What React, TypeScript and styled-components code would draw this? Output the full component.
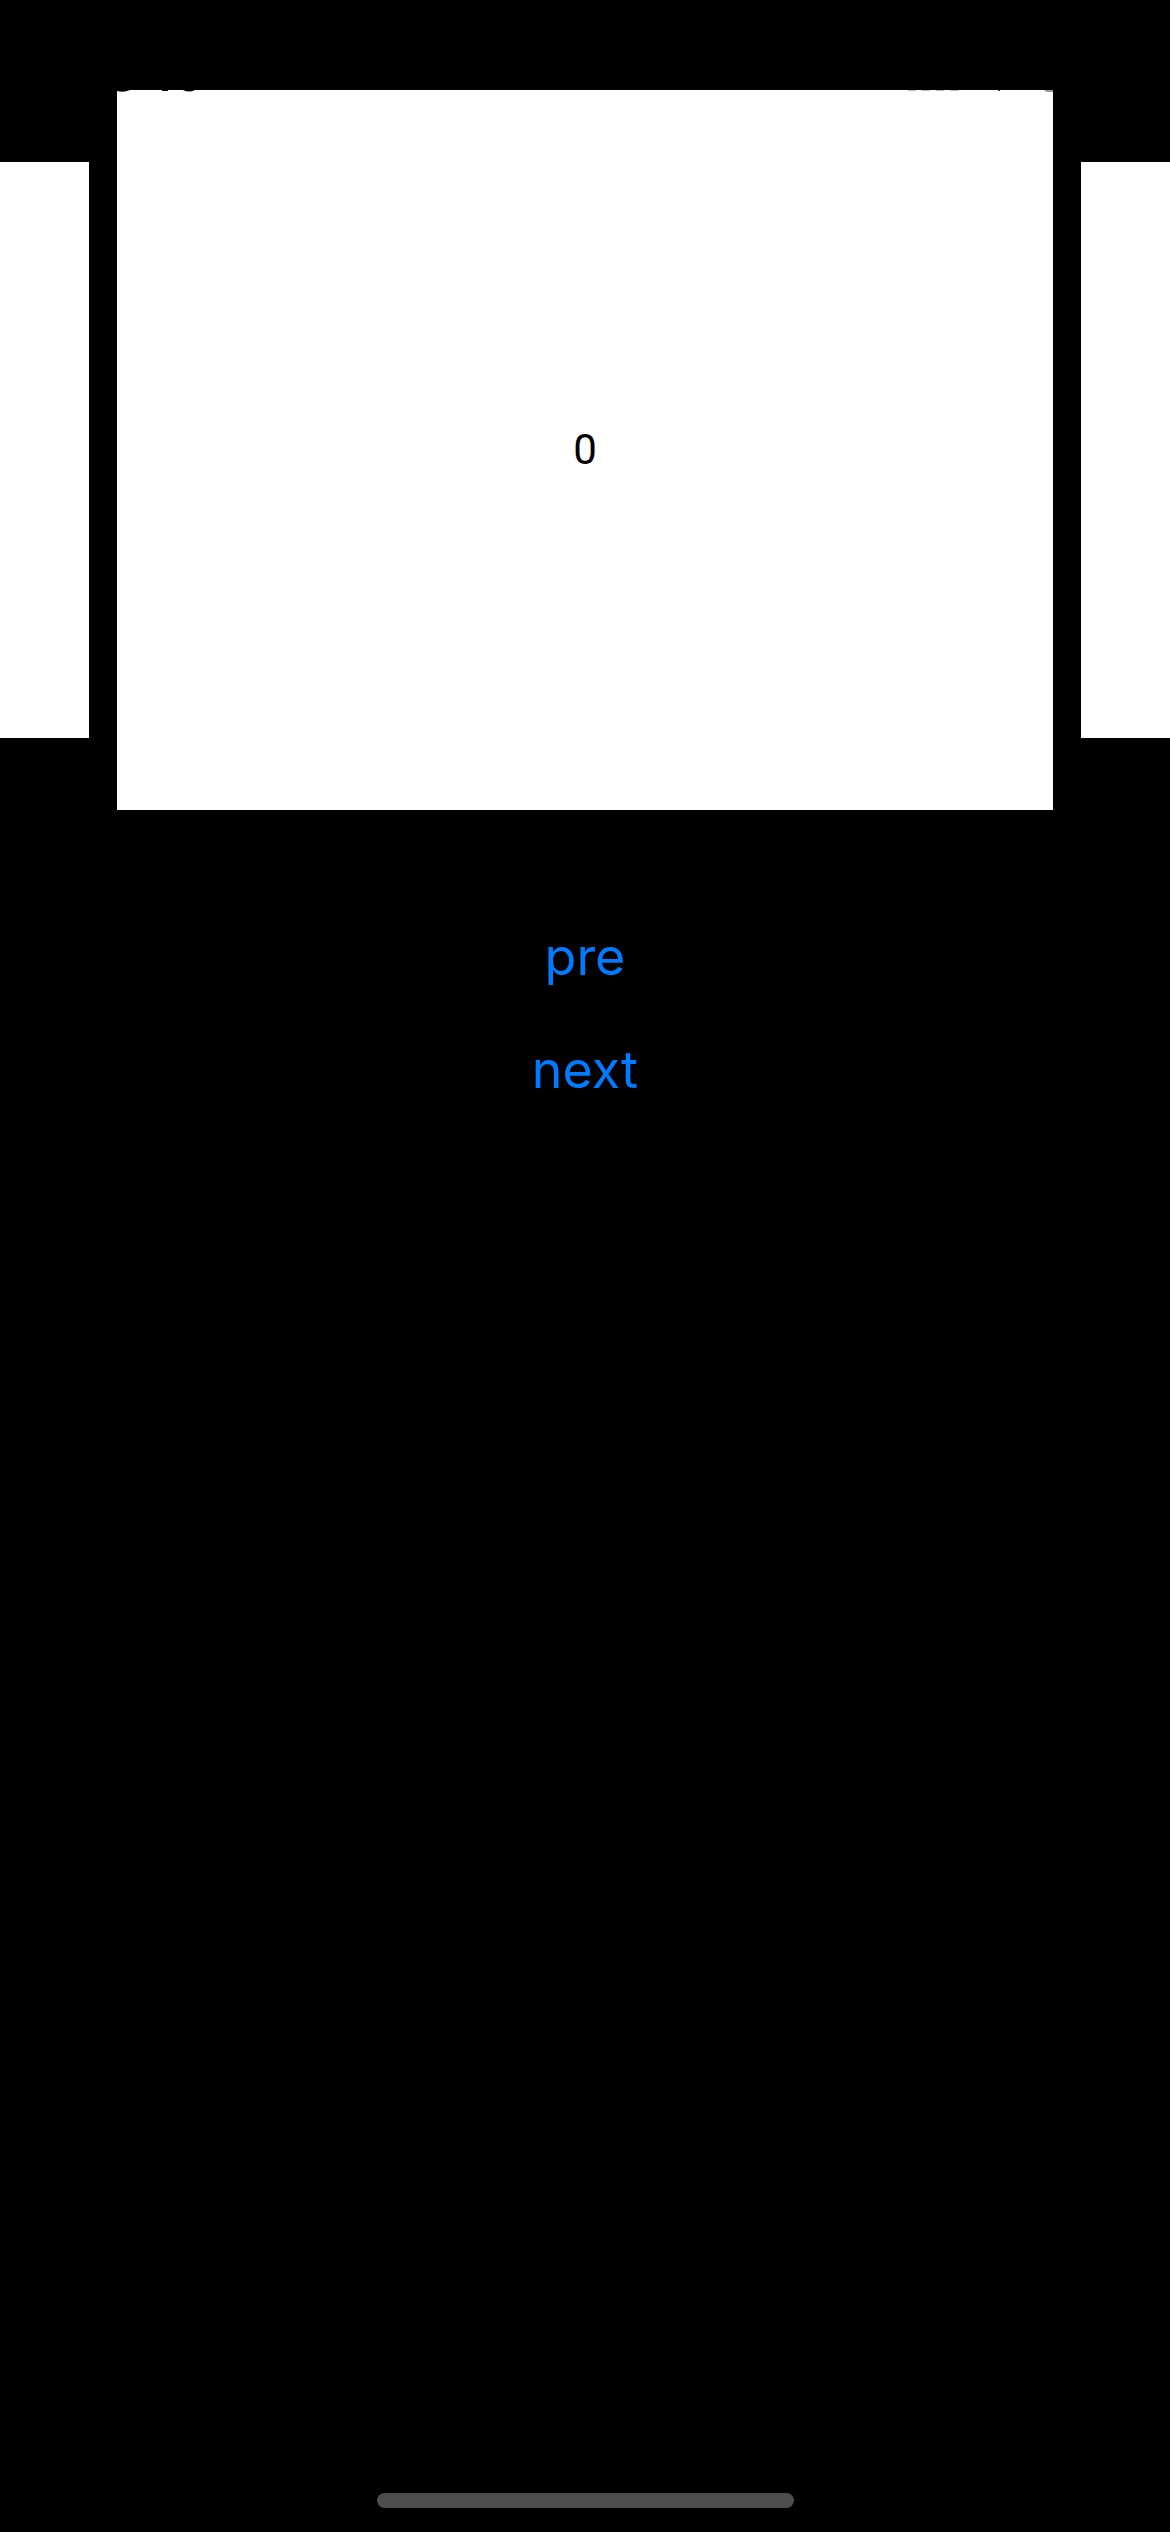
import React, { useState } from "react";
import styled, { createGlobalStyle } from "styled-components";

const GlobalStyle = createGlobalStyle`
  * { box-sizing: border-box; }
  body { margin: 0; background: #000; font-family: Inter, "Liberation Sans", sans-serif; }
`;

const Screen = styled.div`
  min-height: 100vh;
  display: flex;
  flex-direction: column;
  background: #000;
  overflow: hidden;
`;

const Carousel = styled.section`
  display: flex;
  align-items: center;
  justify-content: center;
  gap: 28px;
  margin-top: 90px;
  height: 720px;
`;

const Slide = styled.article<{ $active?: boolean }>`
  position: relative;
  flex: ${(p) => (p.$active ? "0 0 80%" : "0 0 64%")};
  height: ${(p) => (p.$active ? "100%" : "80%")};
  display: flex;
  align-items: center;
  justify-content: center;
  background: #fff;
  color: #000;
  font-family: Roboto, Inter, sans-serif;
  font-size: 42px;
  line-height: 50px;
`;

const StatusEdge = styled.svg<{ $side: "left" | "right" }>`
  position: absolute;
  top: 0;
  ${(p) => p.$side}: 0;
`;

const Controls = styled.nav`
  display: flex;
  flex-direction: column;
  align-items: center;
  gap: 52px;
  margin-top: 116px;
`;

const TextButton = styled.button`
  padding: 0;
  border: 0;
  background: none;
  color: #007aff;
  font-family: inherit;
  font-size: 52px;
  line-height: 61px;
  cursor: pointer;
`;

const HomeIndicator = styled.div`
  width: 417px;
  height: 15px;
  margin: auto auto 24px;
  border-radius: 8px;
  background: #4d4d4d;
`;

export default function App() {
  const [index, setIndex] = useState(0);

  return (
    <>
      <GlobalStyle />
      <Screen>
        <Carousel aria-label="Slides">
          <Slide aria-hidden="true" />
          <Slide $active>
            <StatusEdge $side="left" width="90" height="3" aria-hidden="true">
              <path d="M0 0h13q-6 3-13 1zM45 0h6v1h-6zM66 0h12q-6 3-12 0z" />
            </StatusEdge>
            {index}
            <StatusEdge $side="right" width="160" height="3" aria-hidden="true">
              <path d="M15 0h8v1h-8zM29 0h8v1h-8zM43 0h8v1h-8zM57 0h8v1h-8z" fill="#b5b5b5" />
              <path d="M105 0h2v1h-2z" fill="#333" />
              <path d="M151 0h9v2h-5q-3 0-4-2z" fill="#999" />
            </StatusEdge>
          </Slide>
          <Slide aria-hidden="true" />
        </Carousel>
        <Controls aria-label="Slide controls">
          <TextButton type="button" onClick={() => setIndex(index - 1)}>pre</TextButton>
          <TextButton type="button" onClick={() => setIndex(index + 1)}>next</TextButton>
        </Controls>
        <HomeIndicator />
      </Screen>
    </>
  );
}
